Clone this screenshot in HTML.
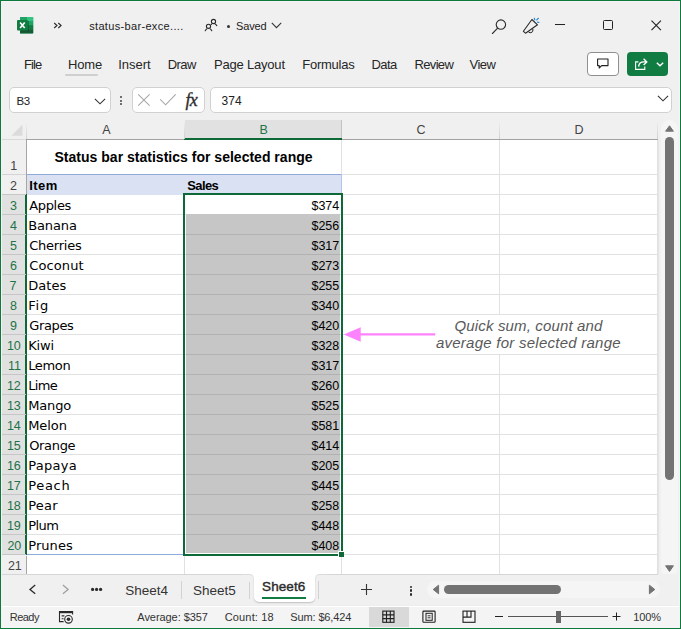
<!DOCTYPE html><html><head><meta charset="utf-8"><title>status-bar-excel</title><style>
*{box-sizing:border-box;margin:0;padding:0}
html,body{width:681px;height:629px;overflow:hidden;background:#f0f0f0}
body{position:relative;font-family:"Liberation Sans",sans-serif;color:#1f1f1f;font-size:13px}
.abs{position:absolute}
.t{position:absolute;white-space:nowrap;line-height:1}
.frame{position:absolute;left:0;top:0;width:681px;height:629px;border:1px solid #0b7a3b;box-shadow:inset 0 0 0 1px #f6f2f5;z-index:50;pointer-events:none}
.box{position:absolute;background:#fff;border:1px solid #d1d1d1;border-radius:5px}
.hl{position:absolute;height:1px;background:#e1e1e1}
.vl{position:absolute;width:1px;background:#e1e1e1}
</style></head><body>
<svg class="abs" style="left:17px;top:17px" width="17" height="17" viewBox="0 0 17 17">
<rect x="3" y="0" width="13.2" height="16.4" rx="1" fill="#21a366"/>
<rect x="3" y="0" width="7" height="4.1" fill="#21a366"/><rect x="10" y="0" width="6.2" height="4.1" fill="#33c481"/>
<rect x="3" y="4.1" width="7" height="4.1" fill="#107c41"/><rect x="10" y="4.1" width="6.2" height="4.1" fill="#21a366"/>
<rect x="3" y="8.2" width="7" height="4.1" fill="#0e6c39"/><rect x="10" y="8.2" width="6.2" height="4.1" fill="#107c41"/>
<rect x="3" y="12.3" width="13.2" height="4.1" fill="#185c37"/>
<rect x="4" y="4" width="8" height="10.5" fill="#0b4a2a" opacity=".55"/>
<rect x="0" y="3" width="11" height="10.4" rx="1" fill="#107c41"/>
<path d="M3.1 5.4 L7.7 11 M7.7 5.4 L3.1 11" stroke="#fff" stroke-width="1.6" fill="none"/>
</svg>
<svg class="abs" style="left:50px;top:18px" width="16" height="14" viewBox="50 18 16 14"><path d="M54.2 23 L57 25.5 L54.2 28 M58.3 23 L61.1 25.5 L58.3 28" stroke="#2a2a2a" stroke-width="1.1" fill="none"/></svg>
<div class="t" style="left:89.20px;top:20.80px;font-family:'Liberation Sans',sans-serif;font-size:11px;color:#222;letter-spacing:0.333px;">status-bar-exce....</div>
<svg class="abs" style="left:200px;top:14px" width="24" height="22" viewBox="200 14 24 22" fill="none" stroke="#2a2a2a" stroke-width="1.1" stroke-linecap="round">
<circle cx="213.5" cy="21.5" r="2.1"/><circle cx="208.5" cy="26.3" r="2.1"/>
<path d="M205.2 30.7 Q205.9 29.5 206.9 28.9 M210.1 28.9 Q211.1 29.5 211.8 30.7"/>
<path d="M215.1 24.1 Q216.1 24.6 216.8 25.6 M211.6 24.1 L211.2 24.5"/></svg>
<div class="abs" style="left:227px;top:25.2px;width:3.2px;height:3.2px;border-radius:50%;background:#333"></div>
<div class="t" style="left:236.10px;top:20.60px;font-family:'Liberation Sans',sans-serif;font-size:11px;color:#222;letter-spacing:-0.150px;">Saved</div>
<svg class="abs" style="left:271px;top:22px" width="11" height="7" viewBox="0 0 11 7"><path d="M0.8 0.9 L5.5 5.6 L10.2 0.9" stroke="#333" stroke-width="1.1" fill="none"/></svg>
<svg class="abs" style="left:484px;top:10px" width="64" height="32" viewBox="484 10 64 32" fill="none" stroke="#2a2a2a" stroke-width="1.1" stroke-linecap="round"><circle cx="500.9" cy="24.6" r="4.7"/><path d="M497.4 28.3 L492.4 33.5"/><path d="M531.9 19.5 L537.5 24.8 L525.5 33.2 L523.4 31.3 Z" stroke-linejoin="round"/><path d="M529 32.1 C530.4 33.4 533.4 32.4 532.9 29.4"/><path d="M534.3 18.3 L534.8 19.9 M536.7 19.9 L538.4 18.3 M537.5 22.2 L539 22.5" stroke="#2b88d8" stroke-width="1.2"/></svg>
<div class="abs" style="left:555px;top:24.1px;width:10.3px;height:1.2px;background:#222"></div>
<div class="abs" style="left:602.7px;top:20.1px;width:10.2px;height:9.8px;border:1.15px solid #222;border-radius:1.5px"></div>
<svg class="abs" style="left:648px;top:16px" width="18" height="18" viewBox="648 16 18 18"><path d="M651.5 20.7 L660.9 30.1 M660.9 20.7 L651.5 30.1" stroke="#222" stroke-width="1.15" fill="none"/></svg>
<div class="t" style="left:24.10px;top:58.10px;font-family:'Liberation Sans',sans-serif;font-size:13px;color:#262626;letter-spacing:-0.933px;">File</div>
<div class="t" style="left:68.10px;top:58.10px;font-family:'Liberation Sans',sans-serif;font-size:13px;color:#262626;letter-spacing:-0.200px;">Home</div>
<div class="t" style="left:118.30px;top:58.10px;font-family:'Liberation Sans',sans-serif;font-size:13px;color:#262626;letter-spacing:-0.060px;">Insert</div>
<div class="t" style="left:167.70px;top:58.10px;font-family:'Liberation Sans',sans-serif;font-size:13px;color:#262626;letter-spacing:-0.567px;">Draw</div>
<div class="t" style="left:214.10px;top:58.10px;font-family:'Liberation Sans',sans-serif;font-size:13px;color:#262626;letter-spacing:-0.210px;">Page Layout</div>
<div class="t" style="left:302.20px;top:58.10px;font-family:'Liberation Sans',sans-serif;font-size:13px;color:#262626;letter-spacing:-0.229px;">Formulas</div>
<div class="t" style="left:371.40px;top:58.10px;font-family:'Liberation Sans',sans-serif;font-size:13px;color:#262626;letter-spacing:-0.533px;">Data</div>
<div class="t" style="left:414.50px;top:58.10px;font-family:'Liberation Sans',sans-serif;font-size:13px;color:#262626;letter-spacing:-0.660px;">Review</div>
<div class="t" style="left:469.60px;top:58.10px;font-family:'Liberation Sans',sans-serif;font-size:13px;color:#262626;letter-spacing:-0.533px;">View</div>
<div class="abs" style="left:64.5px;top:74px;width:33px;height:2px;border-radius:1px;background:#cfcfcf"></div>
<div class="abs" style="left:587px;top:52px;width:32px;height:24px;background:#fff;border:1px solid #8f8f8f;border-radius:4px"></div>
<svg class="abs" style="left:596px;top:58px" width="14" height="12" viewBox="0 0 14 12"><path d="M1.6 1 H12 V7.6 H5.6 L3.2 10 V7.6 H1.6 Z" fill="none" stroke="#222" stroke-width="1.1" stroke-linejoin="round"/></svg>
<div class="abs" style="left:627px;top:52px;width:41px;height:24px;background:#107c41;border-radius:4px"></div>
<svg class="abs" style="left:634px;top:57px" width="15" height="14" viewBox="0 0 15 14" fill="none" stroke="#fff" stroke-width="1.1">
<path d="M4.4 4.9 H1.6 V12.4 H10.8 V9.4"/><path d="M4.6 9.6 C4.9 6.4 7 4.9 9.8 4.9 H12.4 M9.6 1.8 L12.8 4.9 L9.6 8" stroke-width="1.35"/></svg>
<svg class="abs" style="left:656px;top:62px" width="8" height="5" viewBox="0 0 8 5"><path d="M0.8 0.8 L4 3.8 L7.2 0.8" stroke="#fff" stroke-width="1.4" fill="none"/></svg>
<div class="box" style="left:9px;top:87px;width:102px;height:26px"></div>
<div class="t" style="left:16.50px;top:95.70px;font-family:'Liberation Sans',sans-serif;font-size:11.5px;color:#222;letter-spacing:-0.500px;">B3</div>
<svg class="abs" style="left:94px;top:98px" width="12" height="7" viewBox="0 0 12 7"><path d="M0.9 0.9 L6 5.8 L11.1 0.9" stroke="#333" stroke-width="1.1" fill="none"/></svg>
<div class="abs" style="left:119.8px;top:96px;width:2px;height:2px;background:#444;border-radius:50%"></div>
<div class="abs" style="left:119.8px;top:99.5px;width:2px;height:2px;background:#444;border-radius:50%"></div>
<div class="abs" style="left:119.8px;top:103px;width:2px;height:2px;background:#444;border-radius:50%"></div>
<div class="box" style="left:132px;top:87px;width:73px;height:26px"></div>
<svg class="abs" style="left:130px;top:84px" width="80" height="32" viewBox="130 84 80 32" fill="none" stroke="#a6a6a6" stroke-width="1.05"><path d="M138.2 94.4 L149.6 105.6 M149.6 94.4 L138.2 105.6"/><path d="M160.2 99.4 L165.6 104.8 L175.7 94.4"/></svg>
<div class="t" style="left:185.5px;top:90.8px;font-family:'Liberation Serif',serif;font-style:italic;font-size:18px;color:#2e2e2e;letter-spacing:-0.8px;-webkit-text-stroke:0.35px #2e2e2e">fx</div>
<div class="box" style="left:210px;top:87px;width:462px;height:26px"></div>
<div class="t" style="left:221.60px;top:94.70px;font-family:'Liberation Sans',sans-serif;font-size:12px;color:#222;letter-spacing:0.050px;">374</div>
<svg class="abs" style="left:656.5px;top:95.2px" width="12" height="7" viewBox="0 0 12 7"><path d="M0.9 0.9 L6 5.8 L11.1 0.9" stroke="#333" stroke-width="1.1" fill="none"/></svg>
<div class="abs" style="left:27px;top:140px;width:631px;height:434px;background:#fff"></div>
<div class="abs" style="left:185px;top:120px;width:157px;height:20px;background:#e1e1e1;border-right:1px solid #c2c2c2"></div>
<div class="abs" style="left:2px;top:139px;width:24px;height:1px;background:#d9d9d9"></div><div class="abs" style="left:26px;top:139px;width:632px;height:1px;background:#a3a3a3"></div><div class="abs" style="left:26px;top:122px;width:1px;height:17px;background:linear-gradient(#f0f0f0,#d4d4d4)"></div>
<div class="abs" style="left:184px;top:138px;width:158px;height:2px;background:#0d6a38"></div>
<div class="abs" style="left:184px;top:121px;width:1px;height:18px;background:linear-gradient(#f0f0f0,#cfcfcf)"></div>
<div class="abs" style="left:499px;top:121px;width:1px;height:18px;background:linear-gradient(#f0f0f0,#cfcfcf)"></div>
<div class="abs" style="left:657px;top:121px;width:1px;height:18px;background:linear-gradient(#f0f0f0,#cfcfcf)"></div>
<div class="t" style="left:102.20px;top:123.90px;font-family:'Liberation Sans',sans-serif;font-size:12.5px;color:#444;letter-spacing:0.000px;">A</div>
<div class="t" style="left:259.60px;top:123.90px;font-family:'Liberation Sans',sans-serif;font-size:12.5px;color:#217346;letter-spacing:0.000px;">B</div>
<div class="t" style="left:416.50px;top:123.90px;font-family:'Liberation Sans',sans-serif;font-size:12.5px;color:#444;letter-spacing:0.000px;">C</div>
<div class="t" style="left:574.50px;top:123.90px;font-family:'Liberation Sans',sans-serif;font-size:12.5px;color:#444;letter-spacing:0.000px;">D</div>
<svg class="abs" style="left:11.4px;top:123.8px" width="12" height="12" viewBox="0 0 12 12"><path d="M11.5 0.5 V11.8 H0.3 Z" fill="#dbdbdb"/></svg>
<div class="abs" style="left:1px;top:195px;width:24px;height:360px;background:#e1e1e1"></div>
<div class="abs" style="left:25px;top:194px;width:2px;height:361px;background:#0d6a38"></div>
<div class="abs" style="left:26px;top:140px;width:1px;height:54px;background:#a6a6a6"></div>
<div class="abs" style="left:26px;top:556px;width:1px;height:18px;background:#a6a6a6"></div>
<div class="abs" style="left:27px;top:175px;width:314px;height:19px;background:#d9e1f2"></div><div class="abs" style="left:27px;top:194px;width:156px;height:1px;background:#d9e1f2;z-index:2"></div>
<div class="hl" style="left:27px;top:174px;width:631px"></div>
<div class="abs" style="left:1px;top:174px;width:25px;height:1px;background:#d4d4d4"></div>
<div class="hl" style="left:27px;top:194px;width:631px"></div>
<div class="abs" style="left:1px;top:194px;width:25px;height:1px;background:#c6c6c6"></div>
<div class="hl" style="left:27px;top:214px;width:631px"></div>
<div class="abs" style="left:1px;top:214px;width:25px;height:1px;background:#c6c6c6"></div>
<div class="hl" style="left:27px;top:234px;width:631px"></div>
<div class="abs" style="left:1px;top:234px;width:25px;height:1px;background:#c6c6c6"></div>
<div class="hl" style="left:27px;top:254px;width:631px"></div>
<div class="abs" style="left:1px;top:254px;width:25px;height:1px;background:#c6c6c6"></div>
<div class="hl" style="left:27px;top:274px;width:631px"></div>
<div class="abs" style="left:1px;top:274px;width:25px;height:1px;background:#c6c6c6"></div>
<div class="hl" style="left:27px;top:294px;width:631px"></div>
<div class="abs" style="left:1px;top:294px;width:25px;height:1px;background:#c6c6c6"></div>
<div class="hl" style="left:27px;top:314px;width:631px"></div>
<div class="abs" style="left:1px;top:314px;width:25px;height:1px;background:#c6c6c6"></div>
<div class="hl" style="left:27px;top:334px;width:631px"></div>
<div class="abs" style="left:1px;top:334px;width:25px;height:1px;background:#c6c6c6"></div>
<div class="hl" style="left:27px;top:354px;width:631px"></div>
<div class="abs" style="left:1px;top:354px;width:25px;height:1px;background:#c6c6c6"></div>
<div class="hl" style="left:27px;top:374px;width:631px"></div>
<div class="abs" style="left:1px;top:374px;width:25px;height:1px;background:#c6c6c6"></div>
<div class="hl" style="left:27px;top:394px;width:631px"></div>
<div class="abs" style="left:1px;top:394px;width:25px;height:1px;background:#c6c6c6"></div>
<div class="hl" style="left:27px;top:414px;width:631px"></div>
<div class="abs" style="left:1px;top:414px;width:25px;height:1px;background:#c6c6c6"></div>
<div class="hl" style="left:27px;top:434px;width:631px"></div>
<div class="abs" style="left:1px;top:434px;width:25px;height:1px;background:#c6c6c6"></div>
<div class="hl" style="left:27px;top:454px;width:631px"></div>
<div class="abs" style="left:1px;top:454px;width:25px;height:1px;background:#c6c6c6"></div>
<div class="hl" style="left:27px;top:474px;width:631px"></div>
<div class="abs" style="left:1px;top:474px;width:25px;height:1px;background:#c6c6c6"></div>
<div class="hl" style="left:27px;top:494px;width:631px"></div>
<div class="abs" style="left:1px;top:494px;width:25px;height:1px;background:#c6c6c6"></div>
<div class="hl" style="left:27px;top:514px;width:631px"></div>
<div class="abs" style="left:1px;top:514px;width:25px;height:1px;background:#c6c6c6"></div>
<div class="hl" style="left:27px;top:534px;width:631px"></div>
<div class="abs" style="left:1px;top:534px;width:25px;height:1px;background:#c6c6c6"></div>
<div class="hl" style="left:27px;top:554px;width:631px"></div>
<div class="abs" style="left:1px;top:554px;width:25px;height:1px;background:#c6c6c6"></div>
<div class="hl" style="left:27px;top:574px;width:631px"></div>
<div class="abs" style="left:1px;top:574px;width:25px;height:1px;background:#d4d4d4"></div>
<div class="vl" style="left:341px;top:140px;height:434px"></div>
<div class="vl" style="left:499px;top:140px;height:434px"></div>
<div class="vl" style="left:657px;top:140px;height:434px"></div>
<div class="vl" style="left:184px;top:195px;height:379px"></div>
<div class="abs" style="left:27px;top:174px;width:315px;height:1px;background:#8eaadb"></div>
<div class="abs" style="left:341px;top:174px;width:1px;height:20px;background:#b4c6e7"></div>
<div class="abs" style="left:27px;top:554px;width:157px;height:1px;background:#8eaadb"></div>
<div class="abs" style="left:186px;top:214px;width:154px;height:339px;background:#c6c6c6"></div>
<div class="abs" style="left:186px;top:234px;width:154px;height:1px;background:#b2b2b2"></div>
<div class="abs" style="left:186px;top:254px;width:154px;height:1px;background:#b2b2b2"></div>
<div class="abs" style="left:186px;top:274px;width:154px;height:1px;background:#b2b2b2"></div>
<div class="abs" style="left:186px;top:294px;width:154px;height:1px;background:#b2b2b2"></div>
<div class="abs" style="left:186px;top:314px;width:154px;height:1px;background:#b2b2b2"></div>
<div class="abs" style="left:186px;top:334px;width:154px;height:1px;background:#b2b2b2"></div>
<div class="abs" style="left:186px;top:354px;width:154px;height:1px;background:#b2b2b2"></div>
<div class="abs" style="left:186px;top:374px;width:154px;height:1px;background:#b2b2b2"></div>
<div class="abs" style="left:186px;top:394px;width:154px;height:1px;background:#b2b2b2"></div>
<div class="abs" style="left:186px;top:414px;width:154px;height:1px;background:#b2b2b2"></div>
<div class="abs" style="left:186px;top:434px;width:154px;height:1px;background:#b2b2b2"></div>
<div class="abs" style="left:186px;top:454px;width:154px;height:1px;background:#b2b2b2"></div>
<div class="abs" style="left:186px;top:474px;width:154px;height:1px;background:#b2b2b2"></div>
<div class="abs" style="left:186px;top:494px;width:154px;height:1px;background:#b2b2b2"></div>
<div class="abs" style="left:186px;top:514px;width:154px;height:1px;background:#b2b2b2"></div>
<div class="abs" style="left:186px;top:534px;width:154px;height:1px;background:#b2b2b2"></div>
<div class="abs" style="left:186px;top:554px;width:154px;height:1px;background:#b2b2b2"></div>
<div class="abs" style="left:183px;top:193px;width:160px;height:2px;background:#0d6a38"></div>
<div class="abs" style="left:183px;top:193px;width:2px;height:363px;background:#0d6a38"></div>
<div class="abs" style="left:341px;top:193px;width:2px;height:358px;background:#0d6a38"></div>
<div class="abs" style="left:183px;top:554px;width:155px;height:2px;background:#0d6a38"></div>
<div class="abs" style="left:338px;top:551px;width:6px;height:6px;background:#fff"></div>
<div class="abs" style="left:339px;top:552px;width:5px;height:5px;background:#0d6a38"></div>
<div class="t" style="left:10.20px;top:159.90px;font-family:'Liberation Sans',sans-serif;font-size:12.5px;color:#444;letter-spacing:0.000px;">1</div>
<div class="t" style="left:10.00px;top:180.00px;font-family:'Liberation Sans',sans-serif;font-size:12.5px;color:#444;letter-spacing:0.000px;">2</div>
<div class="t" style="left:10.00px;top:200.00px;font-family:'Liberation Sans',sans-serif;font-size:12.5px;color:#217346;letter-spacing:0.000px;">3</div>
<div class="t" style="left:10.00px;top:220.00px;font-family:'Liberation Sans',sans-serif;font-size:12.5px;color:#217346;letter-spacing:0.000px;">4</div>
<div class="t" style="left:10.00px;top:240.00px;font-family:'Liberation Sans',sans-serif;font-size:12.5px;color:#217346;letter-spacing:0.000px;">5</div>
<div class="t" style="left:10.00px;top:260.00px;font-family:'Liberation Sans',sans-serif;font-size:12.5px;color:#217346;letter-spacing:0.000px;">6</div>
<div class="t" style="left:9.50px;top:280.00px;font-family:'Liberation Sans',sans-serif;font-size:12.5px;color:#217346;letter-spacing:0.000px;">7</div>
<div class="t" style="left:10.00px;top:300.00px;font-family:'Liberation Sans',sans-serif;font-size:12.5px;color:#217346;letter-spacing:0.000px;">8</div>
<div class="t" style="left:10.00px;top:320.00px;font-family:'Liberation Sans',sans-serif;font-size:12.5px;color:#217346;letter-spacing:0.000px;">9</div>
<div class="t" style="left:6.90px;top:340.00px;font-family:'Liberation Sans',sans-serif;font-size:12.5px;color:#217346;letter-spacing:0.000px;">10</div>
<div class="t" style="left:7.90px;top:360.00px;font-family:'Liberation Sans',sans-serif;font-size:12.5px;color:#217346;letter-spacing:0.000px;">11</div>
<div class="t" style="left:6.90px;top:380.00px;font-family:'Liberation Sans',sans-serif;font-size:12.5px;color:#217346;letter-spacing:0.000px;">12</div>
<div class="t" style="left:6.90px;top:400.00px;font-family:'Liberation Sans',sans-serif;font-size:12.5px;color:#217346;letter-spacing:0.000px;">13</div>
<div class="t" style="left:6.90px;top:420.00px;font-family:'Liberation Sans',sans-serif;font-size:12.5px;color:#217346;letter-spacing:0.000px;">14</div>
<div class="t" style="left:6.90px;top:440.00px;font-family:'Liberation Sans',sans-serif;font-size:12.5px;color:#217346;letter-spacing:0.000px;">15</div>
<div class="t" style="left:6.90px;top:460.00px;font-family:'Liberation Sans',sans-serif;font-size:12.5px;color:#217346;letter-spacing:0.000px;">16</div>
<div class="t" style="left:6.90px;top:480.00px;font-family:'Liberation Sans',sans-serif;font-size:12.5px;color:#217346;letter-spacing:0.000px;">17</div>
<div class="t" style="left:6.90px;top:500.00px;font-family:'Liberation Sans',sans-serif;font-size:12.5px;color:#217346;letter-spacing:0.000px;">18</div>
<div class="t" style="left:6.90px;top:520.00px;font-family:'Liberation Sans',sans-serif;font-size:12.5px;color:#217346;letter-spacing:0.000px;">19</div>
<div class="t" style="left:7.40px;top:540.00px;font-family:'Liberation Sans',sans-serif;font-size:12.5px;color:#217346;letter-spacing:0.000px;">20</div>
<div class="t" style="left:7.90px;top:560.00px;font-family:'Liberation Sans',sans-serif;font-size:12.5px;color:#444;letter-spacing:0.000px;">21</div>
<div class="t" style="left:54.50px;top:150.00px;font-family:'Liberation Sans',sans-serif;font-size:14px;font-weight:bold;color:#000;letter-spacing:0.013px;">Status bar statistics for selected range</div>
<div class="t" style="left:29.30px;top:178.80px;font-family:'Liberation Sans',sans-serif;font-size:13px;font-weight:bold;color:#000;letter-spacing:0.400px;">Item</div>
<div class="t" style="left:187.20px;top:178.70px;font-family:'Liberation Sans',sans-serif;font-size:13px;font-weight:bold;color:#000;letter-spacing:-0.600px;">Sales</div>
<div class="t" style="left:29.20px;top:198.90px;font-family:'DejaVu Sans','Liberation Sans',sans-serif;font-size:13px;color:#000;letter-spacing:-0.320px;">Apples</div>
<div class="t" style="left:240px;width:99.1px;text-align:right;top:199.70px;font-family:'Liberation Sans',sans-serif;font-size:12.5px;color:#000;letter-spacing:-0.08px">$374</div>
<div class="t" style="left:28.20px;top:218.90px;font-family:'DejaVu Sans','Liberation Sans',sans-serif;font-size:13px;color:#000;letter-spacing:-0.120px;">Banana</div>
<div class="t" style="left:240px;width:99.1px;text-align:right;top:219.70px;font-family:'Liberation Sans',sans-serif;font-size:12.5px;color:#000;letter-spacing:-0.08px">$256</div>
<div class="t" style="left:29.20px;top:238.90px;font-family:'DejaVu Sans','Liberation Sans',sans-serif;font-size:13px;color:#000;letter-spacing:-0.229px;">Cherries</div>
<div class="t" style="left:240px;width:99.1px;text-align:right;top:239.70px;font-family:'Liberation Sans',sans-serif;font-size:12.5px;color:#000;letter-spacing:-0.08px">$317</div>
<div class="t" style="left:29.20px;top:258.90px;font-family:'DejaVu Sans','Liberation Sans',sans-serif;font-size:13px;color:#000;letter-spacing:0.133px;">Coconut</div>
<div class="t" style="left:240px;width:99.1px;text-align:right;top:259.70px;font-family:'Liberation Sans',sans-serif;font-size:12.5px;color:#000;letter-spacing:-0.08px">$273</div>
<div class="t" style="left:28.20px;top:278.90px;font-family:'DejaVu Sans','Liberation Sans',sans-serif;font-size:13px;color:#000;letter-spacing:0.075px;">Dates</div>
<div class="t" style="left:240px;width:99.1px;text-align:right;top:279.70px;font-family:'Liberation Sans',sans-serif;font-size:12.5px;color:#000;letter-spacing:-0.08px">$255</div>
<div class="t" style="left:28.20px;top:298.90px;font-family:'DejaVu Sans','Liberation Sans',sans-serif;font-size:13px;color:#000;letter-spacing:0.800px;">Fig</div>
<div class="t" style="left:240px;width:99.1px;text-align:right;top:299.70px;font-family:'Liberation Sans',sans-serif;font-size:12.5px;color:#000;letter-spacing:-0.08px">$340</div>
<div class="t" style="left:29.20px;top:318.90px;font-family:'DejaVu Sans','Liberation Sans',sans-serif;font-size:13px;color:#000;letter-spacing:-0.360px;">Grapes</div>
<div class="t" style="left:240px;width:99.1px;text-align:right;top:319.70px;font-family:'Liberation Sans',sans-serif;font-size:12.5px;color:#000;letter-spacing:-0.08px">$420</div>
<div class="t" style="left:28.20px;top:338.90px;font-family:'DejaVu Sans','Liberation Sans',sans-serif;font-size:13px;color:#000;letter-spacing:-0.133px;">Kiwi</div>
<div class="t" style="left:240px;width:99.1px;text-align:right;top:339.70px;font-family:'Liberation Sans',sans-serif;font-size:12.5px;color:#000;letter-spacing:-0.08px">$328</div>
<div class="t" style="left:28.20px;top:358.90px;font-family:'DejaVu Sans','Liberation Sans',sans-serif;font-size:13px;color:#000;letter-spacing:-0.350px;">Lemon</div>
<div class="t" style="left:240px;width:99.1px;text-align:right;top:359.70px;font-family:'Liberation Sans',sans-serif;font-size:12.5px;color:#000;letter-spacing:-0.08px">$317</div>
<div class="t" style="left:28.20px;top:378.90px;font-family:'DejaVu Sans','Liberation Sans',sans-serif;font-size:13px;color:#000;letter-spacing:-0.633px;">Lime</div>
<div class="t" style="left:240px;width:99.1px;text-align:right;top:379.70px;font-family:'Liberation Sans',sans-serif;font-size:12.5px;color:#000;letter-spacing:-0.08px">$260</div>
<div class="t" style="left:28.20px;top:398.90px;font-family:'DejaVu Sans','Liberation Sans',sans-serif;font-size:13px;color:#000;letter-spacing:-0.150px;">Mango</div>
<div class="t" style="left:240px;width:99.1px;text-align:right;top:399.70px;font-family:'Liberation Sans',sans-serif;font-size:12.5px;color:#000;letter-spacing:-0.08px">$525</div>
<div class="t" style="left:28.20px;top:418.90px;font-family:'DejaVu Sans','Liberation Sans',sans-serif;font-size:13px;color:#000;letter-spacing:-0.050px;">Melon</div>
<div class="t" style="left:240px;width:99.1px;text-align:right;top:419.70px;font-family:'Liberation Sans',sans-serif;font-size:12.5px;color:#000;letter-spacing:-0.08px">$581</div>
<div class="t" style="left:29.20px;top:438.90px;font-family:'DejaVu Sans','Liberation Sans',sans-serif;font-size:13px;color:#000;letter-spacing:-0.320px;">Orange</div>
<div class="t" style="left:240px;width:99.1px;text-align:right;top:439.70px;font-family:'Liberation Sans',sans-serif;font-size:12.5px;color:#000;letter-spacing:-0.08px">$414</div>
<div class="t" style="left:28.20px;top:458.90px;font-family:'DejaVu Sans','Liberation Sans',sans-serif;font-size:13px;color:#000;letter-spacing:0.280px;">Papaya</div>
<div class="t" style="left:240px;width:99.1px;text-align:right;top:459.70px;font-family:'Liberation Sans',sans-serif;font-size:12.5px;color:#000;letter-spacing:-0.08px">$205</div>
<div class="t" style="left:28.20px;top:478.90px;font-family:'DejaVu Sans','Liberation Sans',sans-serif;font-size:13px;color:#000;letter-spacing:0.675px;">Peach</div>
<div class="t" style="left:240px;width:99.1px;text-align:right;top:479.70px;font-family:'Liberation Sans',sans-serif;font-size:12.5px;color:#000;letter-spacing:-0.08px">$445</div>
<div class="t" style="left:28.20px;top:498.90px;font-family:'DejaVu Sans','Liberation Sans',sans-serif;font-size:13px;color:#000;letter-spacing:0.200px;">Pear</div>
<div class="t" style="left:240px;width:99.1px;text-align:right;top:499.70px;font-family:'Liberation Sans',sans-serif;font-size:12.5px;color:#000;letter-spacing:-0.08px">$258</div>
<div class="t" style="left:28.20px;top:518.90px;font-family:'DejaVu Sans','Liberation Sans',sans-serif;font-size:13px;color:#000;letter-spacing:-0.533px;">Plum</div>
<div class="t" style="left:240px;width:99.1px;text-align:right;top:519.70px;font-family:'Liberation Sans',sans-serif;font-size:12.5px;color:#000;letter-spacing:-0.08px">$448</div>
<div class="t" style="left:28.20px;top:538.90px;font-family:'DejaVu Sans','Liberation Sans',sans-serif;font-size:13px;color:#000;letter-spacing:0.080px;">Prunes</div>
<div class="t" style="left:240px;width:99.1px;text-align:right;top:539.70px;font-family:'Liberation Sans',sans-serif;font-size:12.5px;color:#000;letter-spacing:-0.08px">$408</div>
<div class="abs" style="left:434px;top:315px;width:223px;height:39px;background:#fff"></div>
<svg class="abs" style="left:340px;top:320px" width="100" height="30" viewBox="340 320 100 30"><path d="M359 334.4 H435.2" stroke="#fd82fd" stroke-width="2.2"/><path d="M343.8 334.4 L360.7 327.2 V341.8 Z" fill="#fd82fd"/></svg>
<div class="t" style="left:454.50px;top:318.00px;font-family:'Liberation Sans',sans-serif;font-size:15px;font-style:italic;color:#595959;letter-spacing:0.147px;">Quick sum, count and</div>
<div class="t" style="left:435.90px;top:334.60px;font-family:'Liberation Sans',sans-serif;font-size:15px;font-style:italic;color:#595959;letter-spacing:0.252px;">average for selected range</div>
<div class="abs" style="left:661px;top:120px;width:17px;height:457px;border-radius:8.5px;background:#f5f5f5"></div>
<div class="abs" style="left:658px;top:140px;width:1px;height:435px;background:#e4e4e4"></div>
<svg class="abs" style="left:664px;top:124px" width="11" height="9" viewBox="0 0 11 9"><path d="M5.5 1.8 L9.4 7.2 H1.6 Z" fill="#737373" stroke="#737373" stroke-width="1" stroke-linejoin="round"/></svg>
<div class="abs" style="left:665px;top:137px;width:9px;height:343px;border-radius:4.5px;background:#737373"></div>
<svg class="abs" style="left:664px;top:564px" width="11" height="9" viewBox="0 0 11 9"><path d="M5.5 7.4 L9.4 1.8 H1.6 Z" fill="#737373" stroke="#737373" stroke-width="1" stroke-linejoin="round"/></svg>
<div class="abs" style="left:1px;top:574px;width:679px;height:32px;background:#f0f0f0"></div>
<div class="abs" style="left:1px;top:574px;width:657px;height:1px;background:#d6d6d6"></div>
<svg class="abs" style="left:20px;top:576px" width="100" height="30" viewBox="20 576 100 30" fill="none" stroke-width="1.3"><path d="M35.2 585 L30 589.4 L35.2 593.8" stroke="#2a2a2a"/><path d="M62.9 585 L68.1 589.4 L62.9 593.8" stroke="#a0a0a0"/><g fill="#2a2a2a" stroke="none"><circle cx="92.6" cy="589.4" r="1.6"/><circle cx="96.6" cy="589.4" r="1.6"/><circle cx="100.6" cy="589.4" r="1.6"/></g></svg>
<div class="t" style="left:125.20px;top:583.50px;font-family:'Liberation Sans',sans-serif;font-size:13.5px;color:#333;letter-spacing:-0.000px;">Sheet4</div>
<div class="abs" style="left:181px;top:581px;width:1px;height:18px;background:#d2d2d2"></div>
<div class="t" style="left:193.00px;top:583.50px;font-family:'Liberation Sans',sans-serif;font-size:13.5px;color:#333;letter-spacing:0.000px;">Sheet5</div>
<div class="abs" style="left:249px;top:581px;width:1px;height:18px;background:#d2d2d2"></div>
<div class="abs" style="left:253.5px;top:574px;width:61px;height:28px;background:#fff;border-radius:0 0 5px 5px;box-shadow:0 0.5px 1.5px rgba(0,0,0,.2)"></div><div class="abs" style="left:249.5px;top:572px;width:69px;height:6px;background:#fff"></div><div class="abs" style="left:241.5px;top:574px;width:12px;height:8px;background:#f0f0f0;border-top:1px solid #dcdcdc;border-right:1px solid #e4e4e4;border-top-right-radius:4.5px"></div><div class="abs" style="left:314.5px;top:574px;width:12px;height:8px;background:#f0f0f0;border-top:1px solid #dcdcdc;border-left:1px solid #e4e4e4;border-top-left-radius:4.5px"></div>
<div class="t" style="left:262.10px;top:580.30px;font-family:'Liberation Sans',sans-serif;font-size:13.5px;color:#2b2b2b;-webkit-text-stroke:0.4px #2b2b2b;letter-spacing:0.080px;">Sheet6</div>
<div class="abs" style="left:262px;top:597px;width:43.7px;height:2px;background:#107c41"></div>
<div class="abs" style="left:318px;top:581px;width:1px;height:18px;background:#d2d2d2"></div>
<svg class="abs" style="left:360px;top:583px" width="13" height="13" viewBox="0 0 13 13"><path d="M6.5 1 V12 M1 6.5 H12" stroke="#333" stroke-width="1.1"/></svg>
<div class="abs" style="left:409.9px;top:585.5500000000001px;width:2.3px;height:2.3px;border-radius:50%;background:#2a2a2a"></div>
<div class="abs" style="left:409.9px;top:589.45px;width:2.3px;height:2.3px;border-radius:50%;background:#2a2a2a"></div>
<div class="abs" style="left:409.9px;top:593.35px;width:2.3px;height:2.3px;border-radius:50%;background:#2a2a2a"></div>
<div class="abs" style="left:427px;top:581px;width:233px;height:17px;border-radius:8.5px;background:#f5f5f5"></div>
<svg class="abs" style="left:432px;top:584px" width="8" height="11" viewBox="0 0 8 11"><path d="M1.2 5.5 L6.6 1.2 V9.8 Z" fill="#737373" stroke="#737373" stroke-width="1" stroke-linejoin="round"/></svg>
<div class="abs" style="left:444px;top:585px;width:116.5px;height:9px;border-radius:4.5px;background:#737373"></div>
<svg class="abs" style="left:648px;top:584px" width="8" height="11" viewBox="0 0 8 11"><path d="M6.8 5.5 L1.4 1.2 V9.8 Z" fill="#737373" stroke="#737373" stroke-width="1" stroke-linejoin="round"/></svg>
<div class="abs" style="left:1px;top:605px;width:679px;height:1px;background:#ededed"></div><div class="abs" style="left:1px;top:606px;width:679px;height:22px;background:#f4f4f4;border-top:1px solid #fff"></div>
<div class="t" style="left:9.70px;top:611.90px;font-family:'Liberation Sans',sans-serif;font-size:11px;color:#333;letter-spacing:-0.500px;">Ready</div>
<svg class="abs" style="left:56px;top:608px" width="20" height="18" viewBox="56 608 20 18" fill="none" stroke="#2a2a2a" stroke-width="1.1">
<path d="M72.6 614.6 V611.6 H59.5 V621.6 H63.6"/><path d="M59.5 612.4 H72.6" stroke-width="1.6"/><path d="M61.6 615.9 H64.4 M61.6 618.7 H63.6"/><circle cx="68.5" cy="619.3" r="3.8"/><circle cx="68.5" cy="619.3" r="1.8" fill="#2a2a2a" stroke="none"/></svg>
<div class="t" style="left:137.30px;top:611.90px;font-family:'Liberation Sans',sans-serif;font-size:11px;color:#333;letter-spacing:-0.058px;">Average: $357</div>
<div class="t" style="left:224.70px;top:611.90px;font-family:'Liberation Sans',sans-serif;font-size:11px;color:#333;letter-spacing:0.163px;">Count: 18</div>
<div class="t" style="left:290.30px;top:611.90px;font-family:'Liberation Sans',sans-serif;font-size:11px;color:#333;letter-spacing:-0.130px;">Sum: $6,424</div>
<div class="abs" style="left:368.5px;top:607px;width:40px;height:21px;background:#d9d9d9"></div>
<svg class="abs" style="left:376px;top:606px" width="110" height="22" viewBox="376 606 110 22" fill="none" stroke="#1f1f1f" stroke-width="1.1"><rect x="382.8" y="611.1" width="11.2" height="11.2"/><path d="M382.8 614.9 H394 M382.8 618.6 H394 M386.5 611.1 V622.3 M390.3 611.1 V622.3"/><rect x="422.9" y="611.1" width="12.2" height="11.2" rx="0.8" stroke-width="1.1"/><rect x="426" y="613.3" width="6.2" height="7" stroke-width="1"/><path d="M427.6 615.8 H430.6 M427.6 617.8 H430.6" stroke-width="0.9"/><rect x="463" y="611.1" width="12" height="11.2" stroke-width="1.1"/><path d="M463 617.1 H471 V611.1 M467 611.1 V617.1" stroke-width="1.1"/></svg>
<div class="abs" style="left:495px;top:616px;width:8px;height:1px;background:#222"></div>
<div class="abs" style="left:507.5px;top:616px;width:100px;height:1px;background:#555"></div>
<div class="abs" style="left:556px;top:611px;width:4.5px;height:12px;background:#666"></div>
<svg class="abs" style="left:612px;top:612px" width="9" height="9" viewBox="0 0 9 9"><path d="M4.5 0.5 V8.5 M0.5 4.5 H8.5" stroke="#222" stroke-width="1"/></svg>
<div class="t" style="left:633.20px;top:611.90px;font-family:'Liberation Sans',sans-serif;font-size:11px;color:#333;letter-spacing:-0.133px;">100%</div>
<div class="frame"></div>
</body></html>
